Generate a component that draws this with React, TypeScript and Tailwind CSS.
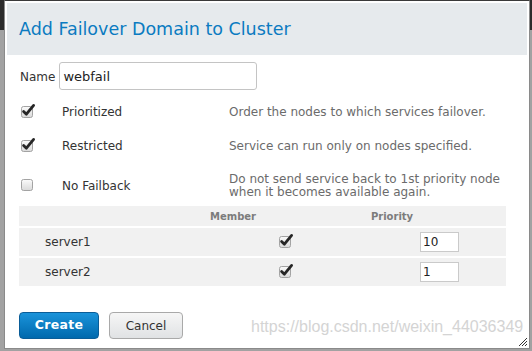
import React from "react";

function Box({ checked }: { checked: boolean }) {
  return (
    <svg width="15" height="15" viewBox="0 0 15 15" className="block">
      <defs>
        <linearGradient id="cbg" x1="0" y1="0" x2="0" y2="1">
          <stop offset="0" stopColor="#fbfbfb" />
          <stop offset="1" stopColor="#d9d9d9" />
        </linearGradient>
      </defs>
      <rect x="0.5" y="3.5" width="11" height="11" rx="2" fill="url(#cbg)" stroke="#a3a3a3" />
      {checked && (
        <path
          d="M2.6 8.4 L5.4 11.2 L12.6 2.4"
          stroke="#262626"
          strokeWidth="2.8"
          fill="none"
          strokeLinecap="round"
          strokeLinejoin="round"
        />
      )}
    </svg>
  );
}

const options = [
  { label: "Prioritized", desc: ["Order the nodes to which services failover."], checked: true, h: "h-[28px]" },
  { label: "Restricted", desc: ["Service can run only on nodes specified."], checked: true, h: "h-[28px]" },
  {
    label: "No Failback",
    desc: ["Do not send service back to 1st priority node", "when it becomes available again."],
    checked: false,
    h: "h-[39px]",
  },
];

const nodes = [
  { name: "server1", priority: "10" },
  { name: "server2", priority: "1" },
];

export default function App() {
  return (
    <div className="h-[351px] w-[532px] overflow-hidden bg-[linear-gradient(#2c2c2c_0,#2c2c2c_30px,#a2a2a2_30px)] pl-[4px] font-['DejaVu_Sans',sans-serif]">
      <div className="relative flex h-[349px] w-[526px] flex-col border border-[#8a8a8a] border-t-[#3a3a3a] bg-white p-[2px]">
        <div className="flex h-[52px] items-center bg-[#e6eaed] pl-[12px] pt-[1px] text-[17.5px] text-[#0b7bc1]">
          Add Failover Domain to Cluster
        </div>

        <div className="flex flex-col pl-[12px] pr-[21px]">
          <div className="mt-[7px] flex items-baseline gap-[4px] pl-[1px]">
            <span className="text-[12px] text-[#333]">Name</span>
            <input
              readOnly
              value="webfail"
              className="h-[28px] w-[198px] rounded-[3px] border border-[#c4c4c4] bg-white pl-[3px] text-[13px] text-[#222] outline-none"
            />
          </div>

          <div className="mt-[8px] flex flex-col gap-[6px]">
            {options.map((o) => (
              <div key={o.label} className={`flex items-center ${o.h}`}>
                <div className="-mt-[4px] w-[43px] pl-[2px]">
                  <Box checked={o.checked} />
                </div>
                <span className="w-[167px] text-[12px] text-[#333]">{o.label}</span>
                <div className="flex flex-col text-[12px] leading-[13px] text-[#6b6b6b]">
                  {o.desc.map((d) => (
                    <span key={d}>{d}</span>
                  ))}
                </div>
              </div>
            ))}
          </div>

          <div className="mt-[1px] flex w-[487px] flex-col gap-[2px]">
            <div className="flex h-[20px] items-center bg-[#f1f1f1] text-[10px] font-bold text-[#7c7c7c]">
              <span className="w-[164px]" />
              <span className="w-[100px] text-center">Member</span>
              <span className="w-[218px] text-center">Priority</span>
            </div>
            {nodes.map((n) => (
              <div key={n.name} className="flex h-[28px] items-center bg-[#f1f1f1]">
                <span className="w-[260px] pl-[26px] text-[12px] text-[#333]">{n.name}</span>
                <div className="-mt-[3px] w-[141px]">
                  <Box checked />
                </div>
                <input
                  readOnly
                  value={n.priority}
                  className="h-[20px] w-[39px] border border-[#cacaca] bg-white pl-[2px] text-[12px] text-[#222] outline-none"
                />
              </div>
            ))}
          </div>

          <div className="mt-[26px] flex gap-[10px]">
            <button className="h-[27px] w-[80px] rounded-[4px] border border-[#0a5d98] bg-[linear-gradient(#1a93da,#0069ad)] text-[12.5px] font-bold tracking-[0.3px] text-white">
              Create
            </button>
            <button className="h-[27px] w-[74px] rounded-[4px] border border-[#a9a9a9] bg-[linear-gradient(#f6f6f6,#e0e2e4)] text-[12px] text-[#333]">
              Cancel
            </button>
          </div>
        </div>

        <span className="pointer-events-none absolute left-[246px] top-[314px] font-['Liberation_Sans',sans-serif] text-[16px] text-[#d4d4d4]">
          https://blog.csdn.net/weixin_44036349
        </span>

        <svg width="10" height="10" viewBox="0 0 10 10" className="absolute bottom-[1px] right-[1px]">
          <path d="M9 1 L1 9 M9 4 L4 9 M9 7 L7 9" stroke="#333" strokeWidth="1" />
        </svg>
      </div>
    </div>
  );
}
